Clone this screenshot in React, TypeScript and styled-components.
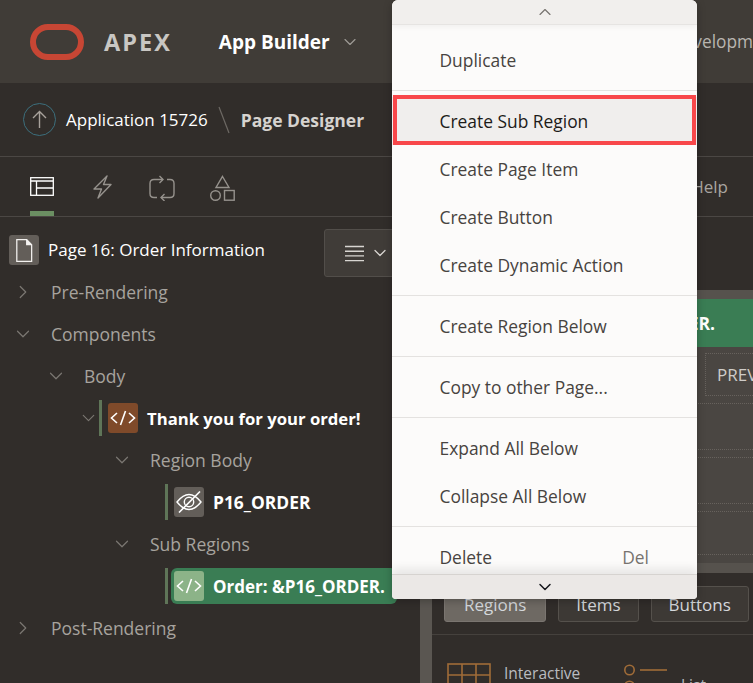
import React from "react";
import styled, { createGlobalStyle } from "styled-components";
import { ChevronDown, ChevronRight, ChevronUp } from "lucide-react";

const GlobalStyle = createGlobalStyle`
  html, body {
    margin: 0;
    padding: 0;
    background: #312d2a;
  }
  * { box-sizing: border-box; }
`;

const Page = styled.div`
  position: relative;
  width: 753px;
  height: 683px;
  overflow: hidden;
  background: #312d2a;
  font-family: "Open Sans", "Noto Sans", sans-serif;
  font-size: 17px;
  color: #fff;
`;

const Header = styled.header`
  height: 83px;
  display: flex;
  align-items: center;
  padding-left: 30px;
  background: #403c37;
`;

const Logo = styled.svg`
  width: 54px;
  height: 36px;
  margin-top: 1px;
  flex: none;
`;

const Apex = styled.span`
  margin-left: 20px;
  font-size: 23.5px;
  font-weight: 700;
  letter-spacing: 2px;
  color: #c9c7c3;
`;

const AppBuilder = styled.span`
  margin-left: 47px;
  font-size: 19px;
  font-weight: 700;
`;

const HeaderCaret = styled.span`
  margin-left: 10px;
  display: flex;
  color: #9d9a95;
`;

const HeaderLink = styled.span`
  margin-left: auto;
  font-size: 17.3px;
  color: #b9b6b1;
  white-space: nowrap;
`;

const Crumbs = styled.nav`
  height: 74px;
  display: flex;
  align-items: center;
  padding-left: 23px;
  border-bottom: 1px solid #4b4744;
`;

const UpButton = styled.span`
  width: 33px;
  height: 33px;
  display: flex;
  align-items: center;
  justify-content: center;
  border: 1px solid #3c6f7d;
  border-radius: 50%;
  color: #a8a29c;
`;

const CrumbLink = styled.span`
  margin-left: 10px;
  font-size: 17px;
`;

const CrumbSep = styled.svg`
  width: 12px;
  height: 28px;
  margin-left: 10px;
`;

const CrumbCurrent = styled.span`
  margin-left: 11px;
  font-size: 17.5px;
  font-weight: 700;
  color: #d6d3cf;
`;

const Tabs = styled.div`
  height: 60px;
  display: flex;
  align-items: stretch;
  padding-left: 12px;
  border-bottom: 1px solid #4b4744;
`;

const Tab = styled.span<{ $active?: boolean }>`
  width: 60px;
  display: flex;
  align-items: center;
  justify-content: center;
  color: ${(p) => (p.$active ? "#fff" : "#96928d")};
  position: relative;

  ${(p) =>
    p.$active &&
    `&::after {
      content: "";
      position: absolute;
      left: 18px;
      bottom: 0;
      width: 24px;
      height: 5px;
      background: #6b8f62;
    }`}
`;

const HelpLink = styled.span`
  margin-left: auto;
  align-self: center;
  padding-right: 25px;
  font-size: 17px;
  color: #a9a5a0;
`;

const Main = styled.div`
  display: grid;
  grid-template-columns: 420px 12px 1fr;
  height: 467px;
`;

const Tree = styled.div`
  padding: 18px 0 0 9px;
  display: flex;
  flex-direction: column;
`;

const PageRow = styled.div`
  height: 36px;
  display: flex;
  align-items: flex-start;
  position: relative;
`;

const NodeIcon = styled.span<{ $bg: string }>`
  width: 30px;
  height: 30px;
  display: flex;
  align-items: center;
  justify-content: center;
  flex: none;
  border-radius: 3px;
  background: ${(p) => p.$bg};
  color: #fff;
`;

const PageTitle = styled.span`
  margin-left: 9px;
  line-height: 30px;
  font-size: 17px;
`;

const ViewButton = styled.span`
  position: absolute;
  left: 315px;
  top: -6px;
  width: 90px;
  height: 48px;
  display: flex;
  align-items: center;
  padding-left: 20px;
  gap: 6px;
  background: #403c38;
  border: 1px solid #524e4a;
  border-radius: 3px;
  color: #d8d5d1;
`;

const Row = styled.div<{ $indent: number }>`
  height: 42px;
  display: flex;
  align-items: center;
  padding-left: ${(p) => p.$indent}px;
`;

const Twist = styled.span`
  width: 39px;
  margin-left: -6px;
  flex: none;
  display: flex;
  align-items: center;
  color: #7b7772;
`;

const LeafTwist = styled(Twist)`
  width: 21px;
`;

const Label = styled.span`
  color: #a7a39e;
  font-size: 17.5px;
`;

const LeafBar = styled.span`
  width: 3px;
  height: 36px;
  margin-right: 3px;
  flex: none;
  background: #5f7558;
`;

const Leaf = styled.span<{ $selected?: boolean }>`
  height: 36px;
  display: flex;
  align-items: center;
  padding-left: 3px;
  padding-right: 12px;
  border-radius: 6px;
  white-space: nowrap;
  background: ${(p) => (p.$selected ? "#3a7d54" : "transparent")};
`;

const LeafText = styled.span<{ $size?: number }>`
  margin-left: 9px;
  font-size: ${(p) => p.$size ?? 17}px;
  font-weight: 700;
`;

const Splitter = styled.div`
  background: #5a5651;
`;

const Right = styled.div`
  display: flex;
  flex-direction: column;
  min-width: 0;
`;

const Canvas = styled.div`
  margin-top: 73px;
  height: 283px;
  flex: none;
  background: #4a4642;
  border-top: 9px solid #56524d;
  border-bottom: 10px solid #56524d;
  display: flex;
  flex-direction: column;
  overflow: hidden;
`;

const CanvasTitle = styled.div`
  height: 48px;
  flex: none;
  display: flex;
  align-items: center;
  justify-content: flex-end;
  padding-right: 38px;
  background: #3a7d54;
  font-size: 17.5px;
  font-weight: 700;
  white-space: nowrap;
`;

const ButtonSlotRow = styled.div`
  height: 43px;
  margin-top: 6px;
  display: flex;
  justify-content: flex-end;
  flex: none;
`;

const ButtonSlot = styled.span`
  width: 48px;
  display: flex;
  align-items: center;
  padding-left: 11px;
  border: 1px dotted #67625d;
  border-right: 0;
  font-size: 17px;
  color: #cfccc8;
  overflow: hidden;
`;

const DottedBand = styled.div<{ $h: number }>`
  height: ${(p) => p.$h}px;
  margin-top: 7px;
  flex: none;
  border-top: 1px dotted #67625d;
  border-bottom: 1px dotted #67625d;
`;

const Gallery = styled.div`
  flex: 1;
  padding: 13px 0 0 12px;
  overflow: hidden;
`;

const GalleryTabs = styled.div`
  display: flex;
  gap: 12px;
  height: 36px;
`;

const GalleryTab = styled.span<{ $active?: boolean }>`
  height: 36px;
  display: flex;
  align-items: center;
  padding: 0 ${(p) => (p.$active ? 19 : 17)}px;
  font-size: 17px;
  color: #d5d8dc;
  white-space: nowrap;
  border-radius: 3px;
  border: 1px solid ${(p) => (p.$active ? "#7a7570" : "#55514c")};
  background: ${(p) => (p.$active ? "#6e6963" : "#3d3935")};
`;

const GalleryRule = styled.div`
  height: 1px;
  margin: 12px 0 0 -12px;
  background: #45413d;
`;

const GalleryItems = styled.div`
  display: flex;
  padding: 28px 0 0 3px;
`;

const GalleryItem = styled.span`
  width: 177px;
  flex: none;
  display: flex;
  align-items: flex-start;
  color: #b9bcc0;
  font-size: 15.5px;
`;

const ItemLabel = styled.span<{ $drop?: number }>`
  margin: ${(p) => p.$drop ?? 0}px 0 0 13px;
  line-height: 20px;
`;

const Menu = styled.div`
  position: absolute;
  left: 392px;
  top: 0;
  width: 305px;
  height: 599px;
  display: flex;
  flex-direction: column;
  background: #fcfbfa;
  border-radius: 6px 6px 4px 4px;
  box-shadow: 0 2px 8px rgba(0, 0, 0, 0.25);
  overflow: hidden;
  color: #474340;
`;

const ScrollTop = styled.div`
  height: 25px;
  flex: none;
  display: flex;
  align-items: center;
  justify-content: center;
  background: #f1efed;
  border-bottom: 1px solid #e6e4e2;
  box-shadow: 0 2px 6px rgba(0, 0, 0, 0.05);
  color: #77736f;
`;

const ScrollBottom = styled.div`
  height: 25px;
  flex: none;
  display: flex;
  align-items: center;
  justify-content: center;
  background: #ebe8e6;
  border-top: 1px solid #d6d3d0;
  box-shadow: 0 -6px 8px rgba(0, 0, 0, 0.08);
  color: #16181d;
  position: relative;
`;

const MenuBody = styled.div`
  flex: 1;
  min-height: 0;
  overflow: hidden;
  padding-top: 11px;
`;

const MenuItem = styled.div<{ $focused?: boolean }>`
  height: 48px;
  display: flex;
  align-items: center;
  justify-content: space-between;
  padding: 0 48px 0 47.5px;
  font-size: 17.4px;
  white-space: nowrap;
  ${(p) => p.$focused && "color: #1d1b19; background: #f0eeed;"}
`;

const MenuSep = styled.div`
  height: 1px;
  margin: 6px 0;
  background: #e4e2e0;
`;

const Shortcut = styled.span`
  color: #77736f;
`;

const Callout = styled.div`
  position: absolute;
  left: 393px;
  top: 95px;
  width: 303px;
  height: 50px;
  border: 4px solid #f8474a;
  pointer-events: none;
`;

const CodeIcon = () => (
  <svg width="26" height="18" viewBox="0 0 26 18" fill="none" stroke="#fff" strokeWidth="1.6">
    <path d="M7 4 L1.5 9 L7 14" />
    <path d="M15.5 2 L10.5 16" />
    <path d="M19 4 L24.5 9 L19 14" />
  </svg>
);

const HiddenIcon = () => (
  <svg width="26" height="22" viewBox="0 0 26 22" fill="none" stroke="#fff" strokeWidth="1.4">
    <path d="M1 11 Q13 -4 25 11 Q13 26 1 11 Z" />
    <circle cx="13" cy="11" r="4.7" />
    <path d="M3 21.5 L24 0.5" strokeWidth="1.6" />
  </svg>
);

const PageIcon = () => (
  <svg width="18" height="25" viewBox="0 0 20 26" fill="none" stroke="#f4f2f0" strokeWidth="1.4">
    <path d="M2 1 H13 L18.5 6.5 V25 H2 Z" />
    <path d="M13 1 V6.5 H18.5" fill="#f4f2f0" />
  </svg>
);

const LayoutIcon = () => (
  <svg width="24" height="19" viewBox="0 0 24 19" fill="none" stroke="#fff" strokeWidth="1.3">
    <rect x="0.7" y="0.7" width="22.6" height="17.6" />
    <path d="M1 4 H23 M6.5 4 V18 M6.5 11 H23" />
  </svg>
);

const BoltIcon = () => (
  <svg width="19" height="24" viewBox="0 0 19 24" fill="none" stroke="currentColor" strokeWidth="1.4" strokeLinejoin="round">
    <path d="M14 1 L1 14 H8.5 L5 23 L18 9.5 H10.5 Z" />
  </svg>
);

const SwapIcon = () => (
  <svg width="26" height="28" viewBox="0 0 26 28" fill="none" stroke="currentColor" strokeWidth="1.4">
    <path d="M14 6.5 H5 Q1 6.5 1 10.5 V20.5 Q1 24.5 5 24.5 H8" />
    <path d="M10.5 3 L14 6.5 L10.5 10" />
    <path d="M12 24.5 H21 Q25 24.5 25 20.5 V10.5 Q25 6.5 21 6.5 H18" />
    <path d="M15.5 21 L12 24.5 L15.5 28" />
  </svg>
);

const ShapesIcon = () => (
  <svg width="26" height="28" viewBox="0 0 26 28" fill="none" stroke="currentColor" strokeWidth="1.4">
    <path d="M13.5 3.5 L20 14.5 H7 Z" />
    <circle cx="6.5" cy="22.5" r="4.8" />
    <rect x="15.5" y="17.5" width="9.7" height="9.7" />
  </svg>
);

const MenuLines = () => (
  <svg width="19" height="17" viewBox="0 0 19 17" fill="none" stroke="currentColor" strokeWidth="1.4">
    <path d="M0 1.5 H19 M0 6.2 H19 M0 10.9 H19 M0 15.6 H19" />
  </svg>
);

const GridGlyph = () => (
  <svg width="44" height="34" viewBox="0 0 44 34" fill="none" stroke="#a06c38" strokeWidth="1.6" style={{ flex: "none" }}>
    <rect x="1" y="1" width="42" height="40" />
    <path d="M1 12 H43 M15 1 V34 M29 1 V34" />
  </svg>
);

const ListGlyph = () => (
  <svg width="44" height="34" viewBox="0 0 44 34" fill="none" stroke="#a06c38" strokeWidth="1.6" style={{ flex: "none" }}>
    <circle cx="5.5" cy="7" r="4.7" />
    <path d="M16 7 H43" />
    <circle cx="5.5" cy="23" r="4.7" />
    <path d="M16 23 H43" />
  </svg>
);

const menuGroups: { label: string; focused?: boolean; shortcut?: string }[][] = [
  [{ label: "Duplicate" }],
  [
    { label: "Create Sub Region", focused: true },
    { label: "Create Page Item" },
    { label: "Create Button" },
    { label: "Create Dynamic Action" },
  ],
  [{ label: "Create Region Below" }],
  [{ label: "Copy to other Page..." }],
  [{ label: "Expand All Below" }, { label: "Collapse All Below" }],
  [{ label: "Delete", shortcut: "Del" }],
];

export default function App() {
  return (
    <Page>
      <GlobalStyle />
      <Header>
        <Logo viewBox="0 0 54 36">
          <rect x="3" y="3" width="48" height="30" rx="15" fill="none" stroke="#c74634" strokeWidth="6" />
        </Logo>
        <Apex>APEX</Apex>
        <AppBuilder>App Builder</AppBuilder>
        <HeaderCaret>
          <ChevronDown size={20} strokeWidth={1.4} />
        </HeaderCaret>
        <HeaderLink>Developm</HeaderLink>
      </Header>

      <Crumbs>
        <UpButton>
          <svg width="17" height="19" viewBox="0 0 17 19" fill="none" stroke="currentColor" strokeWidth="1.4">
            <path d="M8.5 18 V2 M2 8 L8.5 1.5 L15 8" />
          </svg>
        </UpButton>
        <CrumbLink>Application 15726</CrumbLink>
        <CrumbSep viewBox="0 0 12 28">
          <path d="M1 1 L11 27" stroke="#6d6964" strokeWidth="1.2" />
        </CrumbSep>
        <CrumbCurrent>Page Designer</CrumbCurrent>
      </Crumbs>

      <Tabs>
        <Tab $active>
          <LayoutIcon />
        </Tab>
        <Tab>
          <BoltIcon />
        </Tab>
        <Tab>
          <SwapIcon />
        </Tab>
        <Tab>
          <ShapesIcon />
        </Tab>
        <HelpLink>Help</HelpLink>
      </Tabs>

      <Main>
        <Tree>
          <PageRow>
            <NodeIcon $bg="#635e59">
              <PageIcon />
            </NodeIcon>
            <PageTitle>Page 16: Order Information</PageTitle>
            <ViewButton>
              <MenuLines />
              <ChevronDown size={20} strokeWidth={1.5} />
            </ViewButton>
          </PageRow>
          <Row $indent={9}>
            <Twist><ChevronRight size={22} strokeWidth={1.3} /></Twist>
            <Label>Pre-Rendering</Label>
          </Row>
          <Row $indent={9}>
            <Twist><ChevronDown size={22} strokeWidth={1.3} /></Twist>
            <Label>Components</Label>
          </Row>
          <Row $indent={42}>
            <Twist><ChevronDown size={22} strokeWidth={1.3} /></Twist>
            <Label>Body</Label>
          </Row>
          <Row $indent={75}>
            <LeafTwist><ChevronDown size={22} strokeWidth={1.3} /></LeafTwist>
            <LeafBar />
            <Leaf>
              <NodeIcon $bg="#7f4a2a"><CodeIcon /></NodeIcon>
              <LeafText $size={16.7}>Thank you for your order!</LeafText>
            </Leaf>
          </Row>
          <Row $indent={108}>
            <Twist><ChevronDown size={22} strokeWidth={1.3} /></Twist>
            <Label>Region Body</Label>
          </Row>
          <Row $indent={156}>
            <LeafBar />
            <Leaf>
              <NodeIcon $bg="#635e59"><HiddenIcon /></NodeIcon>
              <LeafText $size={17.4}>P16_ORDER</LeafText>
            </Leaf>
          </Row>
          <Row $indent={108}>
            <Twist><ChevronDown size={22} strokeWidth={1.3} /></Twist>
            <Label>Sub Regions</Label>
          </Row>
          <Row $indent={156}>
            <LeafBar />
            <Leaf $selected>
              <NodeIcon $bg="#8cb388"><CodeIcon /></NodeIcon>
              <LeafText>Order: &amp;P16_ORDER.</LeafText>
            </Leaf>
          </Row>
          <Row $indent={9}>
            <Twist><ChevronRight size={22} strokeWidth={1.3} /></Twist>
            <Label>Post-Rendering</Label>
          </Row>
        </Tree>

        <Splitter />

        <Right>
          <Canvas>
            <CanvasTitle>ER.</CanvasTitle>
            <ButtonSlotRow>
              <ButtonSlot>PREV</ButtonSlot>
            </ButtonSlotRow>
            <DottedBand $h={47} />
            <DottedBand $h={47} />
            <DottedBand $h={44} />
          </Canvas>
          <Gallery>
            <GalleryTabs>
              <GalleryTab $active>Regions</GalleryTab>
              <GalleryTab>Items</GalleryTab>
              <GalleryTab>Buttons</GalleryTab>
            </GalleryTabs>
            <GalleryRule />
            <GalleryItems>
              <GalleryItem>
                <GridGlyph />
                <ItemLabel>Interactive</ItemLabel>
              </GalleryItem>
              <GalleryItem>
                <ListGlyph />
                <ItemLabel $drop={12}>List</ItemLabel>
              </GalleryItem>
            </GalleryItems>
          </Gallery>
        </Right>
      </Main>

      <Menu>
        <ScrollTop>
          <ChevronUp size={20} strokeWidth={1.4} />
        </ScrollTop>
        <MenuBody>
          {menuGroups.map((group, i) => (
            <React.Fragment key={group[0].label}>
              {i > 0 && <MenuSep />}
              {group.map((item) => (
                <MenuItem key={item.label} $focused={item.focused}>
                  {item.label}
                  {item.shortcut && <Shortcut>{item.shortcut}</Shortcut>}
                </MenuItem>
              ))}
            </React.Fragment>
          ))}
        </MenuBody>
        <ScrollBottom>
          <ChevronDown size={20} strokeWidth={1.8} />
        </ScrollBottom>
      </Menu>
      <Callout />
    </Page>
  );
}
